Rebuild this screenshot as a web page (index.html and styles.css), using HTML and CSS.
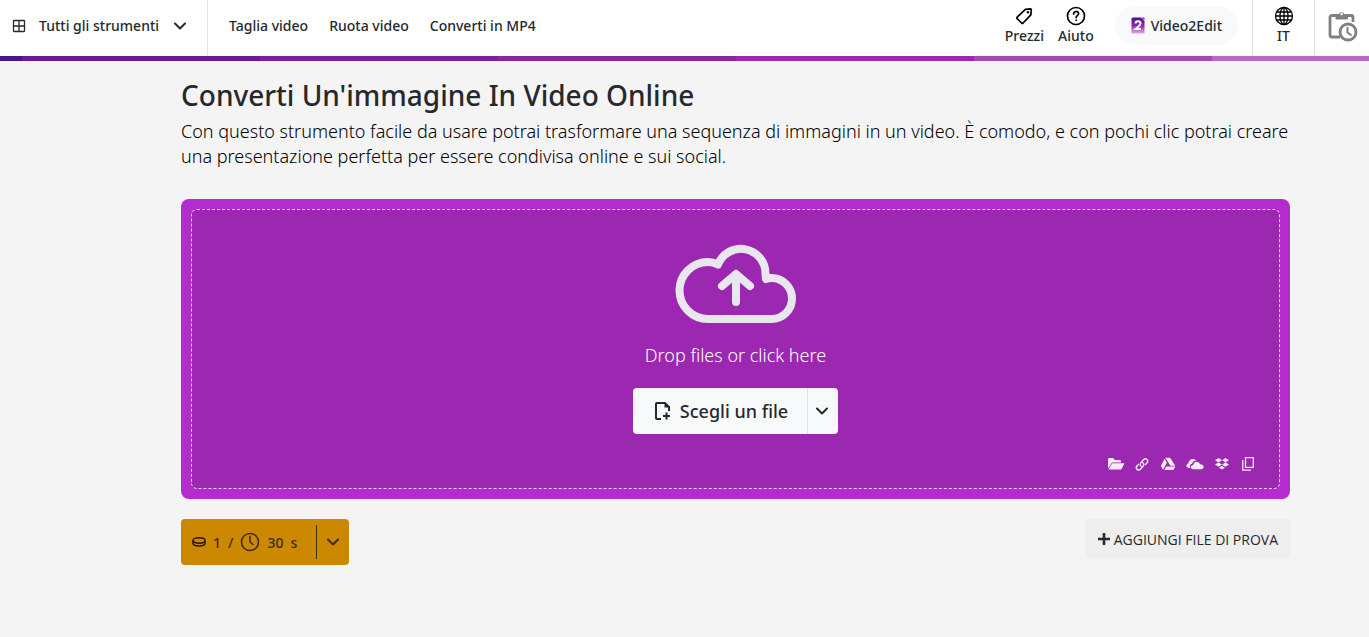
FILE: index.html
```html
<!DOCTYPE html>
<html lang="it">
<head>
<meta charset="utf-8">
<meta name="viewport" content="width=device-width, initial-scale=1">
<title>Converti Un'immagine In Video Online</title>
<link rel="stylesheet" href="styles.css">
</head>
<body>
<header class="topbar">
  <button class="all-tools" type="button">
    <svg class="grid-icon" viewBox="0 0 14 14" fill="none" stroke="currentColor" stroke-width="1.3"><rect x="1.5" y="1.5" width="11" height="11" rx="0.5"/><path d="M7 1.5v11M1.5 7h11"/></svg>
    <span>Tutti gli strumenti</span>
    <svg class="chevron" viewBox="0 0 14 14" fill="none" stroke="currentColor" stroke-width="2" stroke-linecap="round" stroke-linejoin="round"><path d="M2 4.5l5 5 5-5"/></svg>
  </button>
  <nav class="main-nav">
    <a href="#">Taglia video</a>
    <a href="#">Ruota video</a>
    <a href="#">Converti in MP4</a>
  </nav>
  <nav class="side-nav">
    <a class="stacked" href="#">
      <svg class="stacked-icon" viewBox="-1 -1 22 22" fill="none" stroke="#000" stroke-width="1.9" stroke-linejoin="round"><path d="M11.600 2.600L17 2.200q1 0 1 1l-.5 5.600L9 17.700q-.8.700-1.600 0L2.500 12.900q-.7-.8 0-1.600z"/><circle cx="14.300" cy="5.900" r="1.300" fill="#000" stroke="none"/></svg>
      <span>Prezzi</span>
    </a>
    <a class="stacked" href="#">
      <svg class="stacked-icon" viewBox="0 0 20 20" fill="none" stroke="#000" stroke-width="1.700" stroke-linecap="round"><circle cx="10" cy="10" r="8.500"/><path d="M7.600 8c0-3.400 5-3.200 5-.4 0 2-2.500 2-2.500 4"/><circle cx="10.100" cy="14.200" r="0.500" fill="#000" stroke-width="0.800"/></svg>
      <span>Aiuto</span>
    </a>
    <a class="account" href="#">
      <svg class="brand-icon" viewBox="0 0 14 17"><defs><linearGradient id="brand" x1="0" y1="0" x2="0" y2="1"><stop offset="0" stop-color="#4a148c"/><stop offset="0.500" stop-color="#9325ab"/><stop offset="1" stop-color="#dfa9e8"/></linearGradient></defs><path d="M1.500 0.500H10l3.500 3.500v12.500h-13V1.500z" fill="url(#brand)"/><path d="M10.500.5h3v3z" fill="#9c27b0"/><path d="M4.500 6.500c0-3 5-3 5 0 0 2-2.500 3-5 5.500h5.500" fill="none" stroke="#fff" stroke-width="2"/></svg>
      <span>Video2Edit</span>
    </a>
  </nav>
  <button class="language stacked" type="button">
    <svg class="stacked-icon" viewBox="0 0 20 20" fill="none" stroke="#000" stroke-width="1.300"><circle cx="10" cy="10" r="8.500"/><ellipse cx="10" cy="10" rx="4" ry="8.500"/><path d="M1.500 10h17M10 1.500v17M3 6h14M3 14h14"/></svg>
    <span>IT</span>
  </button>
  <button class="history" type="button" aria-label="Cronologia">
    <svg class="history-icon" viewBox="0 0 30 32" fill="none" stroke="#808080" stroke-width="2.800"><path d="M8 5.500H4q-2 0-2 2V25q0 2 2 2h8M19 5.500h4q2 0 2 2V12"/><path d="M8 4.500h3a3 3 0 0 1 5.500 0h3V9H8z" fill="#808080" stroke-width="1"/><circle cx="13.700" cy="4" r="1.200" fill="#fff" stroke="none"/><circle cx="20" cy="22" r="8" fill="#fff"/><path d="M19.500 17v5.500l4 3" stroke-width="2"/></svg>
  </button>
</header>
<div class="stripe"><i></i><i></i><i></i><i></i><i></i><i></i><i></i></div>

<main class="page">
  <h1>Converti Un'immagine In Video Online</h1>
  <p class="intro">Con questo strumento facile da usare potrai trasformare una sequenza di immagini in un video. È comodo, e con pochi clic potrai creare una presentazione perfetta per essere condivisa online e sui social.</p>

  <section class="uploader">
    <div class="dropzone">
      <svg class="cloud" viewBox="0 0 120 78" fill="none" stroke="#e9e7ee" stroke-width="8" stroke-linecap="round" stroke-linejoin="round"><path d="M32 74h63.500a20.500 20.500 0 0 0 0-41q-3 0-5.500 1L89.500 29A24.600 24.600 0 0 0 42 19.500Q37 17 32 17A28.500 28.500 0 0 0 32 74z"/><path d="M60 57V30M46 41l14-12 14 12"/></svg>
      <p class="hint">Drop files or click here</p>
      <div class="file-buttons">
        <button class="choose" type="button">
          <svg class="file-icon" viewBox="0 0 18 20" fill="none" stroke="currentColor" stroke-width="2"><path d="M7 18H3q-1 0-1-1V3q0-1 1-1h8l4 4v4"/><path d="M10.500 1v5.500H16z" fill="currentColor" stroke="none"/><path d="M12.500 11.500v7M9 15h7"/></svg>
          <span>Scegli un file</span>
        </button>
        <button class="more" type="button" aria-label="Altre origini">
          <svg class="chevron" viewBox="0 0 14 14" fill="none" stroke="currentColor" stroke-width="2" stroke-linecap="round" stroke-linejoin="round"><path d="M2 4.500l5 5 5-5"/></svg>
        </button>
      </div>
      <div class="sources">
        <button type="button" aria-label="File"><svg viewBox="0 0 18 14" fill="currentColor"><path d="M1 11V2q0-1 1-1h4l2 2h5q1 0 1 1v1.500H5L1.500 11z"/><path d="M5.200 6.300H17.500L14.500 12q-.3.500-1 .5H1.500z"/></svg></button>
        <button type="button" aria-label="URL"><svg viewBox="0 0 18 14" fill="none" stroke="currentColor" stroke-width="1.400" stroke-linecap="round"><path d="M8.500 9.500C6.500 8 7 6.500 8.500 5l2.200-2.500c2-1.900 5.300.7 3.500 3L12.500 7.500"/><path d="M9.500 5.500c2 1.500 1.500 3 0 4.500l-2.200 2.300c-2 1.900-5.300-.7-3.500-3L5.500 7.500"/></svg></button>
        <button type="button" aria-label="Google Drive"><svg viewBox="0 0 18 14" fill="currentColor"><path d="M6.200.8h5l5 8h-4.700zM5.600 1.800l2.300 4-3.900 7L1.800 9zM7.200 9.500h9.200l-2 3.500H5.300z"/></svg></button>
        <button type="button" aria-label="OneDrive"><svg class="wide" viewBox="0 0 18 14" fill="currentColor"><path d="M4.800 11H2.500C-.3 10.500-.2 7 2.500 6.600 2.300 2.500 8 .3 10.200 3.800 7.500 3.600 6.400 5.300 6.200 6.700 4 7 3.300 9.300 4.800 11z"/><path d="M7 12.300c-3-.3-2.600-4.400.3-4.300C7.500 4 13.300 3.300 14 7.300c4.700 0 4.700 5 1 5z"/></svg></button>
        <button type="button" aria-label="Dropbox"><svg viewBox="0 0 18 14" fill="currentColor"><path d="M5.500 1L9 3.200 5.500 5.400 2 3.200zM12.500 1L16 3.200 12.500 5.400 9 3.200zM5.500 5.400L9 7.600 5.500 9.800 2 7.600zM12.500 5.400L16 7.600 12.500 9.800 9 7.600zM9 8.800l3 1.900L9 12.600l-3-1.900z"/></svg></button>
        <button type="button" aria-label="Incolla"><svg viewBox="0 0 18 14" fill="none" stroke="currentColor" stroke-width="1.300"><path d="M6.500.7h7.800v9.600H6.500zM3.700 3v10.200H12"/></svg></button>
      </div>
    </div>
  </section>

  <div class="footer-row">
    <button class="credits" type="button">
      <span class="cost">
        <svg class="coin" viewBox="0 0 14 12" fill="none" stroke="#2b1300" stroke-width="1.500"><ellipse cx="7" cy="4.500" rx="6" ry="2.700"/><path d="M1 4.500v2.500c0 4 12 4 12 0V4.500"/></svg>
        <span>1</span><span>/</span>
        <svg class="clock" viewBox="0 0 20 20" fill="none" stroke="currentColor" stroke-width="1.600" stroke-linecap="round"><circle cx="10" cy="10" r="8.500"/><path d="M10 4.500V10l3 2.500"/></svg>
        <span>30</span><span>s</span>
      </span>
      <svg class="chevron" viewBox="0 0 14 14" fill="none" stroke="currentColor" stroke-width="2" stroke-linecap="round" stroke-linejoin="round"><path d="M2 4.500l5 5 5-5"/></svg>
    </button>
    <button class="sample" type="button">
      <svg class="plus" viewBox="0 0 12 12" fill="none" stroke="currentColor" stroke-width="2.600"><path d="M6 0v12M0 6h12"/></svg>
      <span>AGGIUNGI FILE DI PROVA</span>
    </button>
  </div>
</main>
</body>
</html>
```

FILE: styles.css
```css
* {
  box-sizing: border-box;
}

body {
  margin: 0;
  background: #f4f4f4;
  color: #26292c;
  font-family: "Noto Sans", "Open Sans", sans-serif;
  font-size: 14px;
}

button {
  margin: 0;
  padding: 0;
  border: 0;
  background: none;
  color: inherit;
  font: inherit;
}

a {
  color: inherit;
  text-decoration: none;
}

svg {
  display: block;
  flex: none;
}

.topbar {
  display: flex;
  align-items: stretch;
  height: 56px;
  background: #fff;
  font-weight: 500;
}

.all-tools {
  display: flex;
  align-items: center;
  padding: 0 20px 5px 12px;
  border-right: 1px solid #dee2e6;
}

.grid-icon {
  width: 14px;
  height: 14px;
  margin-right: 13px;
}

.chevron {
  width: 14px;
  height: 14px;
}

.all-tools .chevron {
  margin-left: 14px;
}

.main-nav {
  display: flex;
  align-items: center;
  gap: 21px;
  padding: 0 21px 5px;
}

.side-nav {
  display: flex;
  align-items: center;
  gap: 14px;
  margin-left: auto;
  padding: 0 14px 5px 0;
}

.stacked {
  display: flex;
  flex-direction: column;
  align-items: center;
  line-height: 19px;
}

.stacked-icon {
  width: 20px;
  height: 20px;
}

.account {
  display: flex;
  align-items: center;
  gap: 6px;
  height: 38px;
  margin-left: 7px;
  padding: 0 16px;
  border-radius: 19px;
  background: #f8f9fa;
}

.brand-icon {
  width: 14px;
  height: 17px;
}

.language {
  justify-content: center;
  width: 62px;
  padding-bottom: 5px;
  border-left: 1px solid #dee2e6;
}

.history {
  display: flex;
  align-items: center;
  width: 55px;
  padding: 0 0 5px 13px;
  border-left: 1px solid #dee2e6;
}

.history-icon {
  width: 30px;
  height: 32px;
}

.stripe {
  display: grid;
  grid-template-columns: 22px repeat(6, 238px);
  height: 5px;
  overflow: hidden;
}

.stripe i:nth-child(1) { background: #4a148c; }
.stripe i:nth-child(2) { background: #6a1b8f; }
.stripe i:nth-child(3) { background: #7b2096; }
.stripe i:nth-child(4) { background: #8b259d; }
.stripe i:nth-child(5) { background: #9c27b0; }
.stripe i:nth-child(6) { background: #a549b3; }
.stripe i:nth-child(7) { background: #b569c2; }

.page {
  padding: 14px 79px 0 181px;
}

h1 {
  margin: 0;
  font-size: 28px;
  font-weight: 500;
  line-height: 40px;
}

.intro {
  margin: 4px 0 30px;
  color: #000;
  font-size: 18px;
  font-weight: 300;
  line-height: 25px;
}

.uploader {
  padding: 10px;
  border-radius: 8px;
  background: #b42bce;
}

.dropzone {
  display: flex;
  flex-direction: column;
  align-items: center;
  padding: 35px 22px 17px;
  border: 1px dashed #f3dff7;
  border-radius: 6px;
  background: #9c27b0;
}

.cloud {
  width: 120px;
  height: 78px;
  overflow: visible;
}

.hint {
  margin: 20px 0;
  color: #fff;
  font-size: 18px;
  font-weight: 300;
  line-height: 25px;
}

.file-buttons {
  display: flex;
  height: 46px;
  border-radius: 4px;
  background: #f8f9fa;
  font-size: 18px;
  font-weight: 500;
}

.choose {
  display: flex;
  align-items: center;
  gap: 8px;
  padding: 0 19px 0 21px;
}

.file-icon {
  width: 18px;
  height: 20px;
}

.more {
  padding: 0 9px 0 7px;
  border-left: 1px solid #dee2e6;
}

.sources {
  display: flex;
  align-self: flex-end;
  gap: 8px;
  margin-top: 23px;
  color: #f6ebf8;
}

.sources svg {
  width: 18px;
  height: 14px;
}

.sources .wide {
  width: 20px;
}

.footer-row {
  display: flex;
  align-items: flex-start;
  justify-content: space-between;
  padding-top: 20px;
}

.credits {
  display: flex;
  align-items: center;
  height: 46px;
  padding: 0 9px 0 11px;
  border-radius: 4px;
  background: #cc8800;
  color: #3f2d12;
  font-weight: 500;
}

.cost {
  display: flex;
  align-items: center;
  gap: 7px;
  height: 34px;
  margin-right: 9px;
  padding-right: 19px;
  border-right: 1px solid #3f2d12;
}

.coin {
  width: 14px;
  height: 12px;
}

.clock {
  width: 20px;
  height: 20px;
}

.sample {
  display: flex;
  align-items: center;
  gap: 4px;
  height: 40px;
  padding: 0 12px;
  border-radius: 4px;
  background: #eeeeee;
  font-family: "Open Sans", "Noto Sans", sans-serif;
}

.plus {
  width: 12px;
  height: 12px;
}
```
